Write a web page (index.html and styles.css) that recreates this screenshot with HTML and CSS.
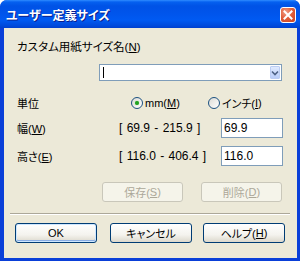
FILE: index.html
```html
<!DOCTYPE html>
<html lang="ja">
<head>
<meta charset="utf-8">
<link rel="stylesheet" href="styles.css">
</head>
<body>
<div class="window">
  <div class="titlebar">
    <span class="title">ユーザー定義サイズ</span>
    <span class="close"><svg width="10" height="10" viewBox="0 0 10 10"><path d="M1.5 1.5 L8.5 8.5 M8.5 1.5 L1.5 8.5" stroke="#fff" stroke-width="2" stroke-linecap="square"/></svg></span>
  </div>
  <div class="client">
    <div class="label-top">カスタム用紙サイズ名(<u>N</u>)</div>
    <div class="combo">
      <span class="caret"></span>
      <span class="drop"><svg width="8" height="6" viewBox="0 0 8 6"><path d="M1 1.5 L4 4.5 L7 1.5" fill="none" stroke="#4D6185" stroke-width="1.6"/></svg></span>
    </div>
    <div class="row unit">
      <span class="lbl">単位</span>
      <label class="radio r-mm"><span class="dot on"></span>mm(<u>M</u>)</label>
      <label class="radio r-inch"><span class="dot"></span>インチ(<u>I</u>)</label>
    </div>
    <div class="row field f1">
      <span class="lbl">幅(<u>W</u>)</span>
      <span class="range">[ 69.9 - 215.9 ]</span>
      <span class="input">69.9</span>
    </div>
    <div class="row field f2">
      <span class="lbl">高さ(<u>E</u>)</span>
      <span class="range">[ 116.0 - 406.4 ]</span>
      <span class="input">116.0</span>
    </div>
    <div class="row btns1">
      <span class="btn disabled">保存(<u>S</u>)</span>
      <span class="btn disabled">削除(<u>D</u>)</span>
    </div>
    <div class="sep"></div>
    <div class="row btns2">
      <span class="btn default">OK</span>
      <span class="btn b-cancel">キャンセル</span>
      <span class="btn b-help">ヘルプ(<u>H</u>)</span>
    </div>
  </div>
</div>
</body>
</html>
```
FILE: styles.css
```css
* { box-sizing: border-box; }
html, body { margin: 0; padding: 0; }
body {
  width: 300px;
  height: 261px;
  overflow: hidden;
  font-family: "Liberation Sans", "Noto Sans CJK JP", sans-serif;
  font-size: 11px;
  font-feature-settings: "palt";
  color: #000;
  background: #fff;
}
u { text-decoration: underline; text-underline-offset: 1px; }
.window {
  width: 300px;
  height: 261px;
  display: flex;
  flex-direction: column;
  background: #0A3FD8;
  border-radius: 7px 7px 0 0;
  overflow: hidden;
}
.titlebar {
  height: 28px;
  flex: none;
  display: flex;
  align-items: center;
  justify-content: space-between;
  padding: 0 4px 0 6px;
  background: linear-gradient(to bottom, #2F8CFF 0px, #0560F0 2px, #0052E6 6px, #0055EC 14px, #005AF2 20px, #0049DA 26px, #0040CE 28px);
}
.title {
  color: #fff;
  font-family: "Noto Sans CJK JP", sans-serif;
  font-weight: bold;
  font-size: 12px;
  text-shadow: 1px 1px 0 #0A1E8C;
  margin-top: 1px;
}
.close {
  width: 16px;
  height: 16px;
  border: 1px solid #fff;
  border-radius: 3px;
  background: radial-gradient(circle at 35% 30%, #F0A08A 0%, #E2603C 45%, #C8401E 100%);
  display: flex;
  align-items: center;
  justify-content: center;
  margin-top: 1px;
}
.client {
  flex: 1;
  margin: 0 3px 3px 4px;
  background: #ECE9D8;
  display: flex;
  flex-direction: column;
}
.label-top {
  margin: 12px 0 0 13px;
  line-height: 14px;
  font-size: 11.5px;
}
.combo {
  margin: 10px 0 0 95px;
  width: 183px;
  height: 17px;
  background: #fff;
  border: 1px solid #7F9DB9;
  display: flex;
  justify-content: space-between;
  align-items: stretch;
  padding: 1px;
}
.caret {
  width: 1px;
  margin: 1px 0 1px 2px;
  background: #000;
}
.drop {
  width: 10px;
  background: linear-gradient(to bottom, #E0EAFE, #B9CDF9);
  border: 1px solid #BCCDF3;
  border-radius: 1px;
  display: flex;
  align-items: center;
  justify-content: center;
}
.row { display: flex; align-items: center; }
.lbl { width: 115px; padding-left: 13px; flex: none; }
.unit { margin-top: 14px; height: 16px; }
.radio { display: flex; align-items: center; }
.r-mm { margin-left: 12px; }
.r-inch { margin-left: 28px; }
.dot {
  width: 12px;
  height: 12px;
  border: 1px solid #1C5180;
  border-radius: 50%;
  background: linear-gradient(135deg, #DCDBD5, #fff);
  margin-right: 2px;
  display: flex;
  align-items: center;
  justify-content: center;
}
.dot.on::after {
  content: "";
  width: 4px;
  height: 4px;
  border-radius: 50%;
  background: #21A121;
  box-shadow: 0 0 1px #5BD05B;
}
.field { height: 20px; }
.f1 { margin-top: 7px; }
.f2 { margin-top: 8px; }
.range { width: 102px; flex: none; font-size: 12px; word-spacing: 1px; }
.input {
  width: 62px;
  height: 20px;
  border: 1px solid #7F9DB9;
  background: #fff;
  padding: 2px 0 0 2px;
  line-height: 14px;
  font-size: 12px;
}
.btn {
  height: 20px;
  width: 81px;
  display: flex;
  align-items: center;
  justify-content: center;
  border: 1px solid #003C74;
  border-radius: 3px;
  background: linear-gradient(to bottom, #FFFFFF 0%, #F4F3EE 60%, #DCD8CC 100%);
}
.btn.disabled {
  border-color: #C9C7BA;
  background: #F5F4EA;
  color: #ACA899;
}
.btns1 { margin-top: 16px; margin-left: 98px; gap: 18px; }
.sep {
  margin: 11px 7px 0 6px;
  height: 2px;
  border-top: 1px solid #ACA899;
  border-bottom: 1px solid #fff;
}
.btns2 { margin-top: 8px; margin-left: 11px; }
.btns2 .btn { width: 82px; }
.btn.default {
  box-shadow: inset 0 0 0 1px #CEE7FF, inset 0 -1px 0 1px #89ADE4;
}
.b-cancel { margin-left: 13px; }
.b-help { margin-left: 11px; }
```
